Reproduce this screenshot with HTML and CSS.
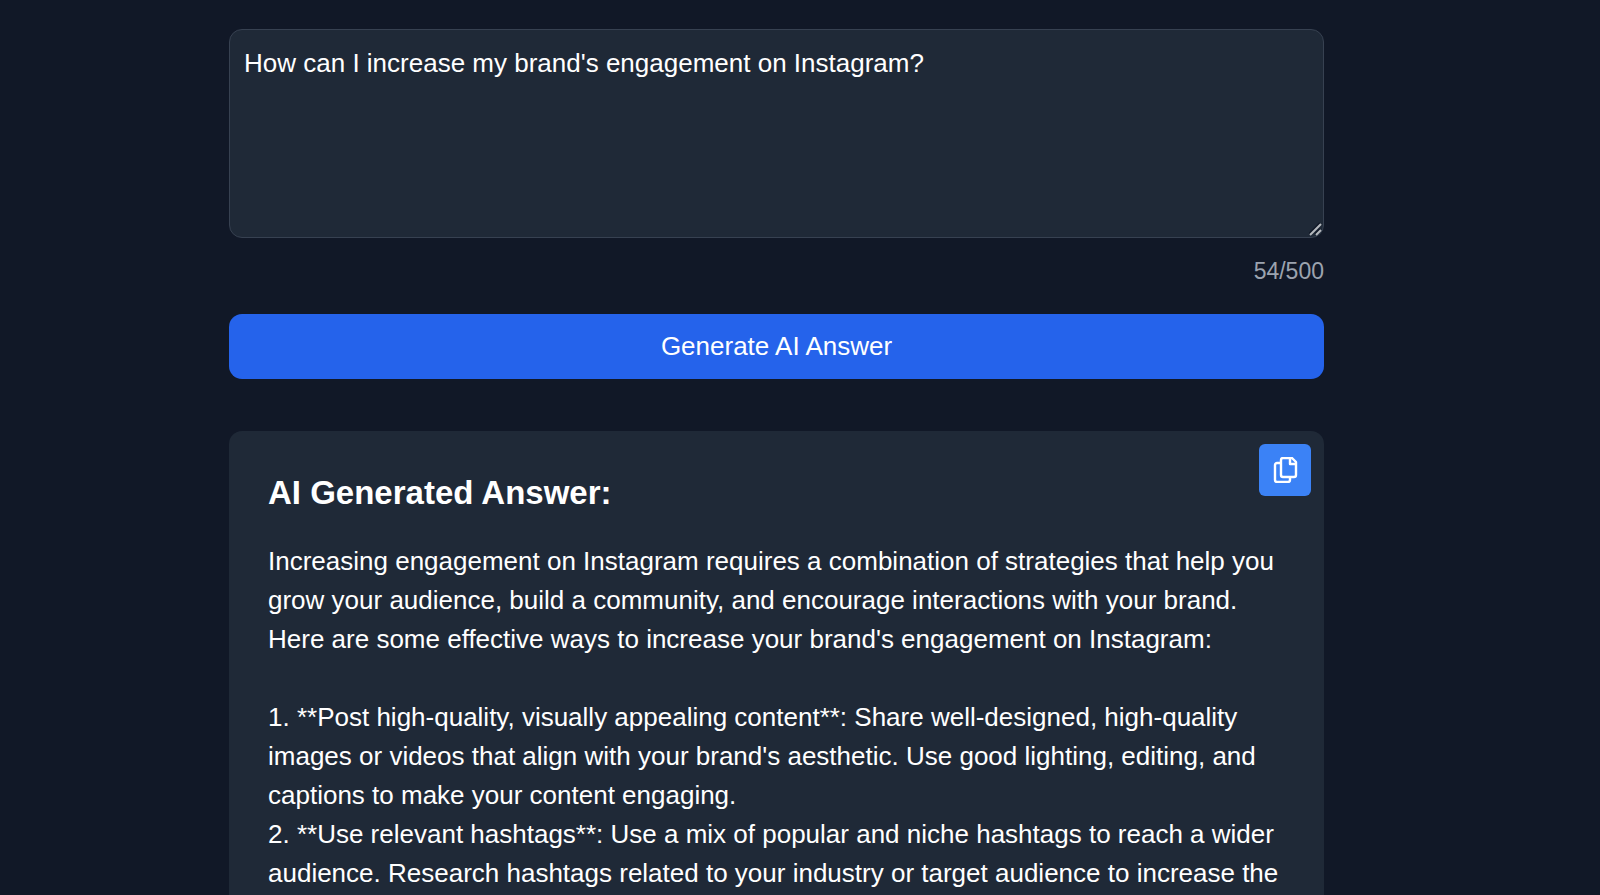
FILE: index.html
```html
<!DOCTYPE html>
<html lang="en">
<head>
  <meta charset="UTF-8">
  <title>AI Answer Generator</title>
  <meta name="viewport" content="width=device-width, initial-scale=1.0">
  <link rel="stylesheet" href="styles.css">
</head>
<body>
  <main class="container">
    <form class="question-form">
      <div class="question">
        <textarea name="question" maxlength="500" aria-label="Your question">How can I increase my brand's engagement on Instagram?</textarea>
        <svg class="grip" viewBox="0 0 14 14" aria-hidden="true">
          <path class="grip-shadow" d="M0 12 L11 1 M6 12 L11 7"/>
          <path class="grip-line" d="M1 13 L12 2 M7 13 L12 8"/>
        </svg>
      </div>
      <p class="counter">54/500</p>
      <button type="button" class="generate">Generate AI Answer</button>
    </form>

    <section class="answer">
      <button type="button" class="copy" aria-label="Copy answer">
        <svg viewBox="0 0 26 26" stroke-width="2.4" aria-hidden="true">
          <path d="M9 6H5a2 2 0 0 0-2 2v15a2 2 0 0 0 2 2h11a2 2 0 0 0 2-2v-3"/>
          <path d="M11 1h9l4 4v13a2 2 0 0 1-2 2H11a2 2 0 0 1-2-2V3a2 2 0 0 1 2-2z"/>
          <path d="M18 1v6h6"/>
        </svg>
      </button>
      <h2>AI Generated Answer:</h2>
      <p class="answer-text">Increasing engagement on Instagram requires a combination of strategies that help you grow your audience, build a community, and encourage interactions with your brand. Here are some effective ways to increase your brand's engagement on Instagram:

1. **Post high-quality, visually appealing content**: Share well-designed, high-quality images or videos that align with your brand's aesthetic. Use good lighting, editing, and captions to make your content engaging.
2. **Use relevant hashtags**: Use a mix of popular and niche hashtags to reach a wider audience. Research hashtags related to your industry or target audience to increase the</p>
    </section>
  </main>
</body>
</html>
```
FILE: styles.css
```css
* {
  box-sizing: border-box;
}
body {
  margin: 0;
  padding: 29px 47px 0 0;
  background: #111827;
  color: #fff;
  font-family: "Liberation Sans", Arial, sans-serif;
  font-size: 26px;
  line-height: 39px;
}
.container {
  max-width: 1095px;
  margin: 0 auto;
}
.question {
  position: relative;
}
textarea {
  display: block;
  width: 100%;
  height: 209px;
  padding: 14px;
  background: #1f2937;
  color: #fff;
  border: 1px solid #374151;
  border-radius: 13px;
  font: inherit;
  resize: none;
}
.grip {
  position: absolute;
  right: 1px;
  bottom: 2px;
  width: 14px;
  height: 14px;
  fill: none;
  stroke-width: 2;
  pointer-events: none;
}
.grip-shadow {
  stroke: #111827;
}
.grip-line {
  stroke: #b4b8bd;
}
.counter {
  margin: 17px 0 26px;
  color: #9ca3af;
  font-size: 23px;
  line-height: 33px;
  text-align: right;
}
button {
  border: none;
  color: #fff;
  font: inherit;
  cursor: pointer;
}
.generate {
  display: block;
  width: 100%;
  padding: 13px;
  background: #2563eb;
  border-radius: 13px;
}
.answer {
  position: relative;
  margin-top: 52px;
  padding: 39px;
  background: #1f2937;
  border-radius: 13px;
}
.copy {
  position: absolute;
  top: 13px;
  right: 13px;
  padding: 13px;
  background: #3b82f6;
  border-radius: 6px;
}
.copy svg {
  display: block;
  width: 26px;
  height: 26px;
  fill: none;
  stroke: #fff;
  stroke-linejoin: round;
}
h2 {
  margin: 0 0 26px;
  font-size: 33px;
  line-height: 46px;
}
.answer-text {
  margin: 0;
  white-space: pre-wrap;
}
```
